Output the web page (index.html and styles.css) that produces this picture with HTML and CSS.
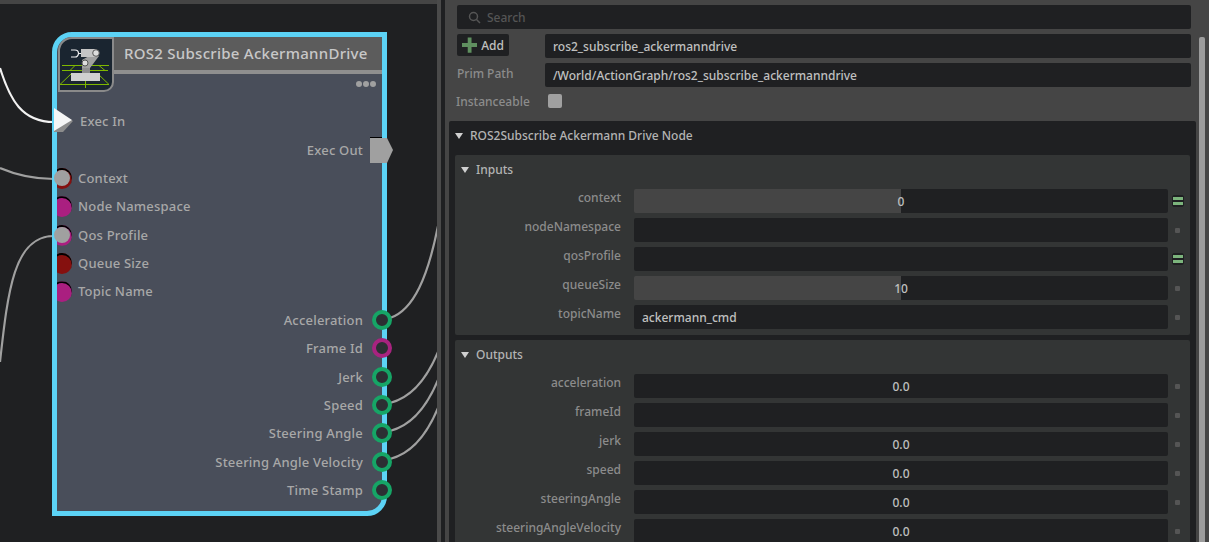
FILE: index.html
```html
<!DOCTYPE html>
<html lang="en">
<head>
<meta charset="utf-8">
<title>ROS2 Subscribe AckermannDrive</title>
<link rel="stylesheet" href="styles.css">
</head>
<body>
<div class="app">
  <section class="canvas">
    <svg class="wires" width="437" height="542" viewBox="0 0 437 542" fill="none">
      <path class="wire white" d="M0 68C10 100 22 122 54 122"/>
      <path class="wire" d="M0 168C14 174 30 179 54 179"/>
      <path class="wire" d="M0 362C8 290 14 236 54 236"/>
      <path class="wire" d="M390 318C414 310 428 276 438 226"/>
      <path class="wire" d="M390 403C414 397 428 376 438 352"/>
      <path class="wire" d="M390 431C414 425 428 404 438 380"/>
      <path class="wire" d="M390 459C414 453 428 432 438 408"/>
    </svg>
    <article class="node">
      <div class="node-head">
        <div class="node-icon">
          <svg width="51" height="51" viewBox="60 39 51 51" fill="none">
            <g stroke="#7fb800" stroke-width="1">
              <path d="M62 65.5H82M91 65.5H109M62 70.5H108M70 70.5l5-5M105 70.5l-6-5M60 84.5H109M60 84.5L72 73M109 84.5L97 73M85.5 79V88"/>
            </g>
            <path d="M71 73H100V81H71z" fill="#d0d0d0"/>
            <path d="M82 66H90V73H82z" fill="#8f8f8f"/>
            <path d="M82 60L89 56H99L90 68H82z" fill="#a0a0a0"/>
            <path d="M81 49H96a4.500 4.500 0 0 1 0 8H81z" fill="#c4c4c4"/>
            <circle cx="96" cy="53" r="3.300" fill="#ddd" stroke="#555"/>
            <circle cx="85" cy="63" r="3" fill="#ddd" stroke="#555"/>
            <path d="M71 50h4a3.500 3.500 0 0 1 0 7h-4M78.500 53.500H81" stroke="#eee" stroke-width="1.200"/>
          </svg>
        </div>
        <div class="node-title"><h1>ROS2 Subscribe AckermannDrive</h1><div class="dots"><i></i><i></i><i></i></div></div>
      </div>
      <div class="rows">
        <div class="row in exec-in">Exec In<svg class="exec-arrow" width="21" height="26" viewBox="0 0 21 26"><path d="M1 1L20 13L10 24H1z" fill="#8c8c8c"/><path d="M1 0L19 12L1 23z" fill="#f5f5f5"/></svg></div>
        <div class="row out">Exec Out<svg class="exec-out" width="23" height="26" viewBox="0 0 23 26"><path d="M0 0H12V2H0z" fill="#000"/><path d="M0 1H17L23 13L17 26H0z" fill="#a0a0a0"/></svg></div>
        <div class="row in">Context<i class="port p-red linked"></i></div>
        <div class="row in">Node Namespace<i class="port p-mag"></i></div>
        <div class="row in">Qos Profile<i class="port p-mag linked"></i></div>
        <div class="row in">Queue Size<i class="port p-red"></i></div>
        <div class="row in">Topic Name<i class="port p-mag"></i></div>
        <div class="row out">Acceleration<i class="ring"></i></div>
        <div class="row out">Frame Id<i class="ring mag"></i></div>
        <div class="row out">Jerk<i class="ring"></i></div>
        <div class="row out">Speed<i class="ring"></i></div>
        <div class="row out">Steering Angle<i class="ring"></i></div>
        <div class="row out">Steering Angle Velocity<i class="ring"></i></div>
        <div class="row out">Time Stamp<i class="ring"></i></div>
      </div>
    </article>
  </section>
  <div class="split"></div>
  <section class="panel">
    <div class="panel-body">
      <div class="search">
        <svg width="13" height="13" viewBox="0 0 13 13" fill="none" stroke="#555" stroke-width="1.500"><circle cx="5.500" cy="5.500" r="4"/><path d="M8.500 8.500L12 12"/></svg>
        <span>Search</span>
      </div>
      <div class="prim-row">
        <div class="add"><svg width="16" height="16" viewBox="0 0 16 16"><path d="M6 0h4v6h6v4h-6v6H6v-6H0V6h6z" fill="#5f8f5f"/></svg>Add</div>
        <div class="field">ros2_subscribe_ackermanndrive</div>
      </div>
      <div class="prim-row path">
        <label>Prim Path</label>
        <div class="field">/World/ActionGraph/ros2_subscribe_ackermanndrive</div>
      </div>
      <div class="inst"><label>Instanceable</label><i class="check"></i></div>
      <div class="frame">
        <h2 class="frame-title"><i class="tri"></i>ROS2Subscribe Ackermann Drive Node</h2>
        <div class="group">
          <h3 class="group-title"><i class="tri"></i>Inputs</h3>
          <div class="attr"><label>context</label><div class="val slider half">0</div><i class="mix"></i></div>
          <div class="attr"><label>nodeNamespace</label><div class="val"></div><i class="dot"></i></div>
          <div class="attr"><label>qosProfile</label><div class="val"></div><i class="mix"></i></div>
          <div class="attr"><label>queueSize</label><div class="val slider half">10</div><i class="dot"></i></div>
          <div class="attr"><label>topicName</label><div class="val text">ackermann_cmd</div><i class="dot"></i></div>
        </div>
        <div class="group">
          <h3 class="group-title"><i class="tri"></i>Outputs</h3>
          <div class="attr"><label>acceleration</label><div class="val slider">0.0</div><i class="dot"></i></div>
          <div class="attr"><label>frameId</label><div class="val"></div><i class="dot"></i></div>
          <div class="attr"><label>jerk</label><div class="val slider">0.0</div><i class="dot"></i></div>
          <div class="attr"><label>speed</label><div class="val slider">0.0</div><i class="dot"></i></div>
          <div class="attr"><label>steeringAngle</label><div class="val slider">0.0</div><i class="dot"></i></div>
          <div class="attr"><label>steeringAngleVelocity</label><div class="val slider">0.0</div><i class="dot"></i></div>
        </div>
      </div>
    </div>
    <div class="scrollbar"><div class="thumb"></div></div>
  </section>
</div>
</body>
</html>
```
FILE: styles.css
```css
* { box-sizing: border-box; }
html, body { margin: 0; height: 100%; }
body { overflow: hidden; background: #454545; font: 500 13px "Noto Sans", "Open Sans", sans-serif; color: #a8a8a8; }
h1, h2, h3 { margin: 0; font: inherit; }
i { display: block; font-style: normal; }
.app { display: flex; width: 1209px; height: 542px; overflow: hidden; }
.canvas { position: relative; flex: 0 0 437px; margin-top: 4px; background: #1f2022; overflow: hidden; }
.wires { position: absolute; left: 0; top: -4px; }
.wire { stroke: #a0a0a0; stroke-width: 2.2; }
.wire.white { stroke: #f2f2f2; }
.node { position: absolute; left: 52px; top: 28px; width: 335px; height: 484px; border: 5px solid #5cd3f6; border-radius: 20px 0 20px 0; background: #494e5a; }
.node-head { display: flex; height: 55px; }
.node-icon { flex: 0 0 56px; height: 55px; margin-left: 1px; background: #1a2530; border: 2px solid #8a8a8a; border-top-left-radius: 14px; border-bottom-right-radius: 10px; overflow: hidden; }
.node-icon svg { display: block; }
.node-title { flex: 1; height: 55px; min-width: 0; }
.node-title h1 { height: 37px; padding: 3px 0 0 10px; background: #5c5c5c; border-bottom: 4px solid #8f8f8f; color: #c8c8c8; font-size: 15px; line-height: 26px; letter-spacing: 0.27px; }
.dots { display: flex; justify-content: flex-end; gap: 1px; padding: 7px 6px 0 0; }
.dots i { width: 6px; height: 6px; border-radius: 50%; background: #a0a0a0; }
.rows { display: flex; flex-direction: column; padding-top: 15.2px; letter-spacing: 0.2px; }
.row { position: relative; height: 28.38px; line-height: 28px; }
.row.in { padding-left: 21px; }
.row.exec-in { padding-left: 23px; }
.row.out { padding-right: 19px; text-align: right; }
.port { position: absolute; left: -5px; top: 4px; width: 20px; height: 21px; }
.port::before { content: ""; position: absolute; inset: 0; border-radius: 50%; box-shadow: inset 0 2px 0 #000; clip-path: inset(0 0 0 5px); }
.p-red::before { background: #85100f; }
.p-mag::before { background: #aa1f80; }
.port.linked::after { content: ""; position: absolute; left: 2px; top: 2px; width: 16px; height: 16px; border-radius: 50%; background: #a0a0a0; }
.exec-arrow { position: absolute; left: -4px; top: 1px; }
.exec-out { position: absolute; right: -11px; top: 1px; }
.ring { position: absolute; right: -10px; top: 4px; width: 20px; height: 20px; border-radius: 50%; border: 4px solid #16a566; background: #2c2f33; }
.ring.mag { border-color: #a8237f; }
.split { flex: 0 0 8px; background: #4a4a4a; border-right: 4px solid #1f2022; }
.panel { flex: 1; display: flex; min-width: 0; background: #454545; }
.panel-body { flex: 0 0 747px; padding: 5px 0 0 4px; }
.search { display: flex; align-items: center; gap: 6px; height: 24px; margin-left: 8px; width: 734px; padding-left: 11px; background: #1f2022; border-radius: 2px; color: #555; font-size: 12px; }
.prim-row { display: flex; align-items: center; height: 24px; margin-top: 5px; margin-left: 8px; width: 734px; }
.prim-row .field { flex: 0 0 646px; margin-left: auto; }
.add { display: flex; align-items: center; align-self: flex-start; gap: 4px; height: 22px; padding: 0 5px 0 5px; width: 52px; background: #1f2022; border-radius: 2px; color: #c0c0c0; font-size: 12px; }
.path label { padding-bottom: 4px; color: #8c8c8c; font-size: 12px; }
.field { height: 24px; padding-left: 8px; line-height: 26px; background: #1f2022; border-radius: 2px; color: #c0c0c0; font-size: 12px; }
.inst { display: flex; align-items: center; height: 28px; margin-left: 7px; color: #8c8c8c; font-size: 12px; }
.inst label { width: 92px; }
.check { width: 14px; height: 14px; background: #a0a0a0; border-radius: 2px; }
.frame { margin-top: 6px; padding: 0 6px; height: 440px; width: 747px; background: #1f2022; border-radius: 2px; }
.frame-title { display: flex; align-items: center; gap: 7px; height: 34px; padding: 0 0 5px 0; color: #b4b4b4; font-size: 12px; }
.group { margin-bottom: 5px; padding: 0 0 6px; width: 735px; background: #333535; border-radius: 2px; }
.group-title { display: flex; align-items: center; gap: 7px; height: 34px; padding: 0 0 5px 6px; color: #b4b4b4; font-size: 12px; }
.tri { width: 0; height: 0; border-left: 4px solid transparent; border-right: 4px solid transparent; border-top: 6px solid #d0d0d0; }
.attr { display: flex; align-items: flex-start; height: 29px; }
.attr:last-child { height: 24px; }
.attr label { flex: 0 0 166px; text-align: right; color: #8c8c8c; font-size: 12px; line-height: 18px; }
.val { flex: 0 0 534px; height: 24px; margin-left: 13px; background: #1f2022; border-radius: 2px; text-align: center; line-height: 25px; color: #c0c0c0; font-size: 12px; }
.val.half { background: linear-gradient(90deg, #454545 50%, #1f2022 50%); }
.val.text { padding-left: 8px; text-align: left; }
.mix { width: 12px; height: 12px; margin: 6px 0 0 4px; background: linear-gradient(#1f2022 0 1px, #7cb47c 1px 4px, #1f2022 4px 6px, #7cb47c 6px 9px, #1f2022 9px); border: 1px solid #1f2022; border-radius: 2px; }
.dot { width: 5px; height: 5px; margin: 10px 0 0 7px; background: #555; border-radius: 1px; }
.scrollbar { flex: 0 0 6px; margin-left: 3px; margin-top: 37px; }
.thumb { height: 100%; background: #9c9c9c; border-radius: 2px 2px 0 0; }
```
